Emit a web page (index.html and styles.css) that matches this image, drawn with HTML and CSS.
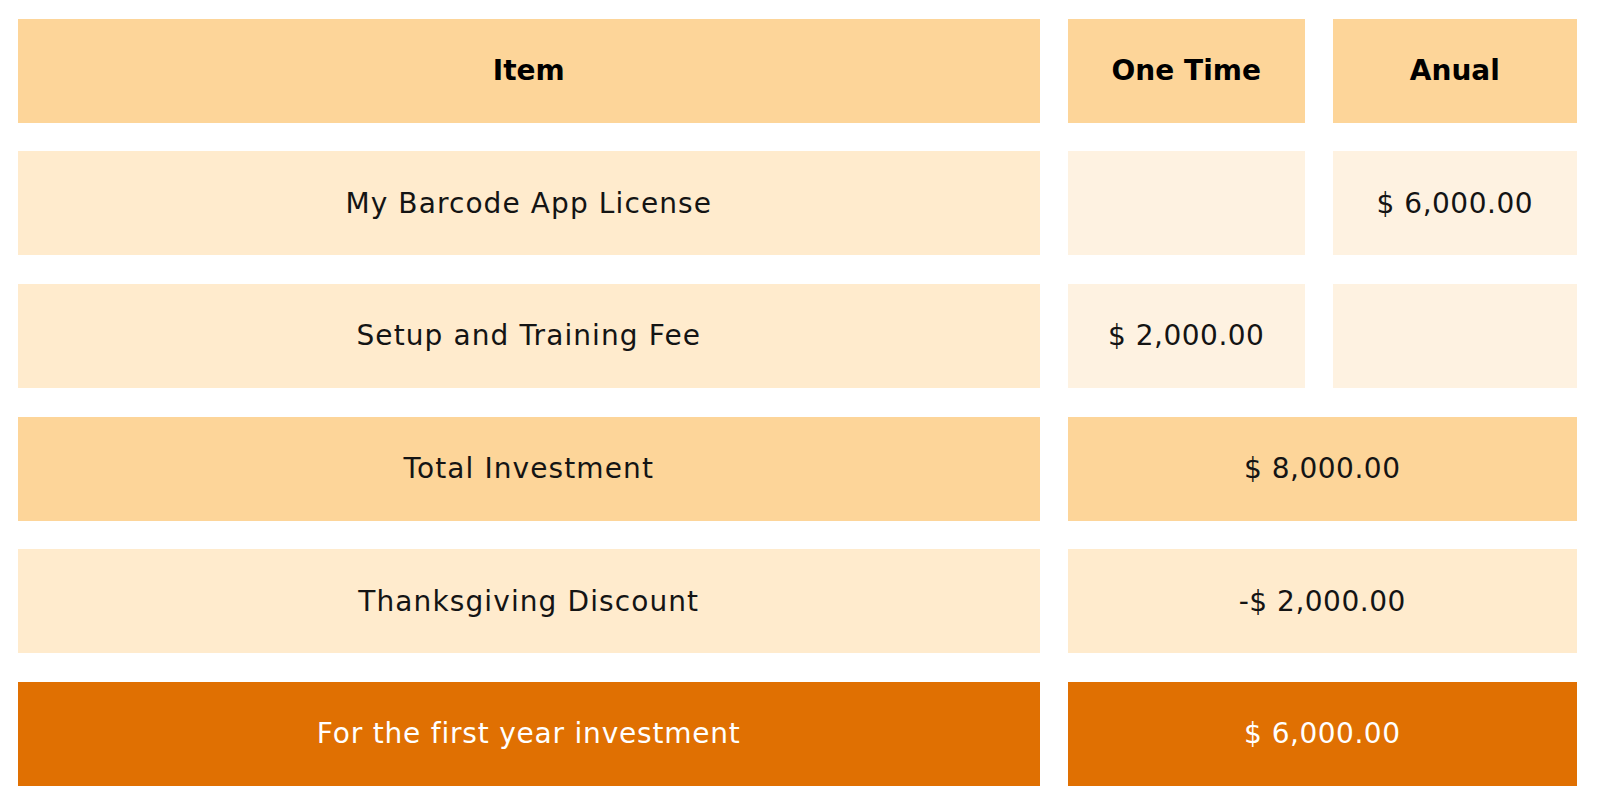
FILE: index.html
```html
<!DOCTYPE html>
<html lang="en">
<head>
<meta charset="utf-8">
<title>Investment</title>
<link rel="stylesheet" href="styles.css">
</head>
<body>
<div class="pricing">
  <div class="cell head">Item</div>
  <div class="cell head">One Time</div>
  <div class="cell head">Anual</div>

  <div class="cell light">My Barcode App License</div>
  <div class="cell pale"></div>
  <div class="cell pale amount">$ 6,000.00</div>

  <div class="cell light">Setup and Training Fee</div>
  <div class="cell pale amount">$ 2,000.00</div>
  <div class="cell pale"></div>

  <div class="cell mid">Total Investment</div>
  <div class="cell mid span amount">$ 8,000.00</div>

  <div class="cell light">Thanksgiving Discount</div>
  <div class="cell light span amount">-$ 2,000.00</div>

  <div class="cell strong">For the first year investment</div>
  <div class="cell strong span amount">$ 6,000.00</div>
</div>
</body>
</html>
```

FILE: styles.css
```css
html, body {
  margin: 0;
  padding: 0;
  background: #ffffff;
}

.pricing {
  display: grid;
  grid-template-columns: 1021.5px 236.7px 243.7px;
  grid-auto-rows: 104px;
  column-gap: 28.4px;
  row-gap: 28.67px;
  padding: 18.67px 0 0 18px;
  font-family: "DejaVu Sans", "Liberation Sans", sans-serif;
  font-size: 28px;
  letter-spacing: 1.1px;
  color: #141414;
}

.cell {
  display: flex;
  align-items: center;
  justify-content: center;
}

.span {
  grid-column: 2 / 4;
}

.amount {
  letter-spacing: 0.5px;
}

.head {
  background: #fdd599;
  font-weight: 700;
  letter-spacing: 0;
  color: #000000;
}

.light {
  background: #ffebcd;
}

.pale {
  background: #fef2e1;
}

.mid {
  background: #fdd599;
}

.strong {
  background: #e07002;
  color: #ffffff;
  letter-spacing: 0.8px;
}

.strong.amount {
  letter-spacing: 0.5px;
}
```
